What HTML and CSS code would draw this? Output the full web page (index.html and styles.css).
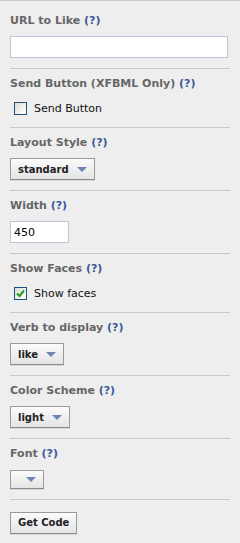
FILE: index.html
```html
<!DOCTYPE html>
<html lang="en">
<head>
    <meta charset="UTF-8">
    <meta name="viewport" content="width=device-width, initial-scale=1.0">
    <title>Like Button Configurator</title>
    <link rel="stylesheet" href="styles.css">
</head>
<body>
    <div class="panel">
        <div class="field first">
            <div class="label">URL to Like <a class="help" href="#">(?)</a></div>
            <input type="text" class="text-input url-input" value="">
        </div>
        <div class="field">
            <div class="label">Send Button (XFBML Only) <a class="help" href="#">(?)</a></div>
            <label class="check-row">
                <span class="checkbox"></span>
                <span class="check-text">Send Button</span>
            </label>
        </div>
        <div class="field">
            <div class="label">Layout Style <a class="help" href="#">(?)</a></div>
            <span class="dropdown"><span class="dropdown-text">standard</span><span class="arrow"></span></span>
        </div>
        <div class="field">
            <div class="label">Width <a class="help" href="#">(?)</a></div>
            <input type="text" class="text-input width-input" value="450">
        </div>
        <div class="field">
            <div class="label">Show Faces <a class="help" href="#">(?)</a></div>
            <label class="check-row">
                <span class="checkbox checked">
                    <svg width="9" height="9" viewBox="0 0 9 9"><path d="M1 4.5 L3.5 7 L8 1.5" fill="none" stroke="#1f9e1f" stroke-width="2"/></svg>
                </span>
                <span class="check-text">Show faces</span>
            </label>
        </div>
        <div class="field">
            <div class="label">Verb to display <a class="help" href="#">(?)</a></div>
            <span class="dropdown"><span class="dropdown-text">like</span><span class="arrow"></span></span>
        </div>
        <div class="field">
            <div class="label">Color Scheme <a class="help" href="#">(?)</a></div>
            <span class="dropdown"><span class="dropdown-text">light</span><span class="arrow"></span></span>
        </div>
        <div class="field">
            <div class="label">Font <a class="help" href="#">(?)</a></div>
            <span class="dropdown empty"><span class="dropdown-text"></span><span class="arrow"></span></span>
        </div>
        <div class="field last">
            <button type="button" class="get-code">Get Code</button>
        </div>
    </div>
</body>
</html>
```

FILE: styles.css
```css
body {
    margin: 0;
    background-color: #eeeeee;
    font-family: "DejaVu Sans", Verdana, sans-serif;
    font-size: 11px;
}
.panel {
    border-top: 1px solid #c8c8c8;
    padding: 0 10px;
}
.field {
    padding: 8px 0 10px;
    border-bottom: 1px solid #c8c8c8;
}
.field.first {
    padding-top: 13px;
}
.field.last {
    border-bottom: none;
    padding-top: 12px;
}
.label {
    font-weight: bold;
    color: #666666;
    line-height: 14px;
    margin-bottom: 8px;
}
.help {
    color: #3b5998;
    text-decoration: none;
}
.text-input {
    display: block;
    box-sizing: border-box;
    height: 22px;
    border: 1px solid #bdc7d8;
    background: white;
    padding: 0 3px;
    margin: 0;
    font-family: "DejaVu Sans", Verdana, sans-serif;
    font-size: 11px;
    color: #000;
    outline: none;
}
.url-input {
    width: 218px;
}
.width-input {
    width: 59px;
}
.check-row {
    display: flex;
    align-items: center;
    height: 18px;
    padding-left: 4px;
}
.checkbox {
    box-sizing: border-box;
    width: 13px;
    height: 13px;
    border: 1px solid #1c5180;
    background: linear-gradient(135deg, #dcdcd4, #ffffff);
    display: flex;
    align-items: center;
    justify-content: center;
}
.check-text {
    margin-left: 7px;
    color: #111;
}
.dropdown {
    display: inline-flex;
    align-items: center;
    box-sizing: border-box;
    height: 22px;
    padding: 0 7px;
    border: 1px solid #9a9a9a;
    border-bottom-color: #8a8a8a;
    background: linear-gradient(#fbfbfb, #e4e4e4);
    box-shadow: 0 1px 0 #d8d8d8;
}
.dropdown.empty {
    height: 19px;
}
.dropdown-text {
    font-size: 10px;
    font-weight: bold;
    color: #222;
}
.arrow {
    margin-left: 8px;
    width: 0;
    height: 0;
    border-left: 5px solid transparent;
    border-right: 5px solid transparent;
    border-top: 5px solid #6d84b4;
}
.get-code {
    display: block;
    box-sizing: border-box;
    height: 22px;
    padding: 0 7px;
    border: 1px solid #9a9a9a;
    border-bottom-color: #8a8a8a;
    background: linear-gradient(#fbfbfb, #e4e4e4);
    box-shadow: 0 1px 0 #d8d8d8;
    font-family: "DejaVu Sans", Verdana, sans-serif;
    font-size: 10px;
    font-weight: bold;
    color: #222;
    cursor: pointer;
}
```
